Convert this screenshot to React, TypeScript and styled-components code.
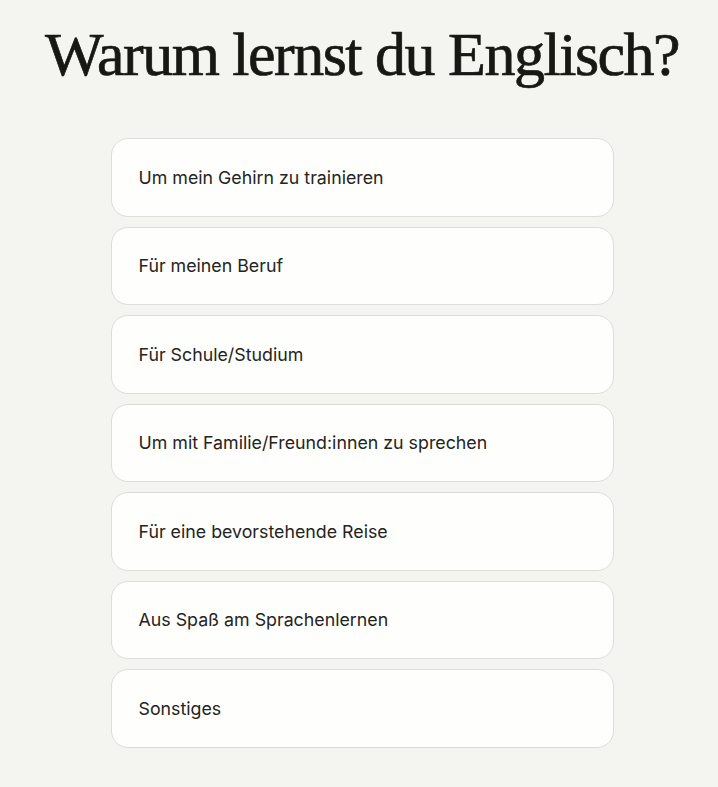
import { FC } from 'react'
import styled, { createGlobalStyle } from 'styled-components'

const GlobalStyle = createGlobalStyle`
  html, body {
    margin: 0;
    padding: 0;
    background: #f4f4f0;
  }
  body {
    font-family: Inter, "Noto Sans", sans-serif;
    color: #1f1f1c;
  }
`

const Page = styled.main`
  display: flex;
  flex-direction: column;
  align-items: center;
  min-height: 787px;
  padding: 16px 0 0 6px;
  box-sizing: border-box;
`

const Title = styled.h1`
  margin: 0 0 46px;
  font-family: "Liberation Serif", "DejaVu Serif", serif;
  font-weight: 400;
  font-size: 62px;
  line-height: 76px;
  letter-spacing: -1.5px;
  -webkit-text-stroke: 0.7px #171714;
  color: #171714;
  text-align: center;
`

const Options = styled.ul`
  list-style: none;
  margin: 0;
  padding: 0;
  width: 503px;
  display: flex;
  flex-direction: column;
  gap: 10px;
`

const Option = styled.li`
  display: flex;
  align-items: center;
  height: 78.5px;
  box-sizing: border-box;
  padding: 0 27px;
  background: #fefefd;
  border: 1px solid #dcdcd8;
  border-radius: 17px;
  font-size: 17.8px;
  color: #242421;
  cursor: pointer;
`

const reasons = [
  'Um mein Gehirn zu trainieren',
  'Für meinen Beruf',
  'Für Schule/Studium',
  'Um mit Familie/Freund:innen zu sprechen',
  'Für eine bevorstehende Reise',
  'Aus Spaß am Sprachenlernen',
  'Sonstiges',
]

const App: FC = () => (
  <>
    <GlobalStyle />
    <Page>
      <Title>Warum lernst du Englisch?</Title>
      <Options>
        {reasons.map((r) => (
          <Option key={r}>{r}</Option>
        ))}
      </Options>
    </Page>
  </>
)

export default App
